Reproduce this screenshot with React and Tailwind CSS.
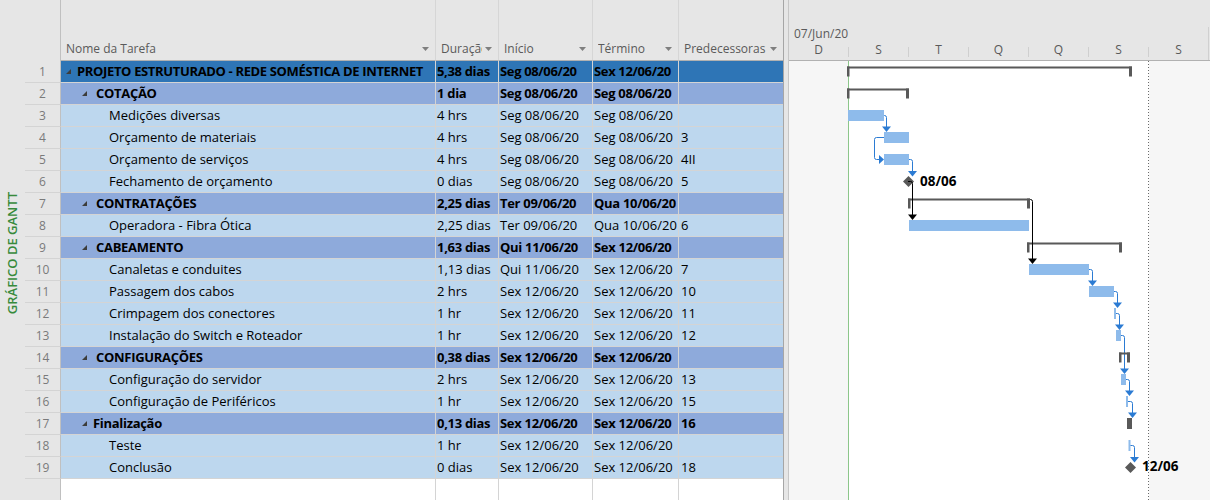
import React from 'react'

const rows = [
  { n: 1, name: 'PROJETO ESTRUTURADO - REDE SOMÉSTICA DE INTERNET', dur: '5,38 dias', ini: 'Seg 08/06/20', fim: 'Sex 12/06/20', pred: '', kind: 'root' },
  { n: 2, name: 'COTAÇÃO', dur: '1 dia', ini: 'Seg 08/06/20', fim: 'Seg 08/06/20', pred: '', kind: 'sum' },
  { n: 3, name: 'Medições diversas', dur: '4 hrs', ini: 'Seg 08/06/20', fim: 'Seg 08/06/20', pred: '', kind: 'task' },
  { n: 4, name: 'Orçamento de materiais', dur: '4 hrs', ini: 'Seg 08/06/20', fim: 'Seg 08/06/20', pred: '3', kind: 'task' },
  { n: 5, name: 'Orçamento de serviços', dur: '4 hrs', ini: 'Seg 08/06/20', fim: 'Seg 08/06/20', pred: '4II', kind: 'task' },
  { n: 6, name: 'Fechamento de orçamento', dur: '0 dias', ini: 'Seg 08/06/20', fim: 'Seg 08/06/20', pred: '5', kind: 'task' },
  { n: 7, name: 'CONTRATAÇÕES', dur: '2,25 dias', ini: 'Ter 09/06/20', fim: 'Qua 10/06/20', pred: '', kind: 'sum' },
  { n: 8, name: 'Operadora - Fibra Ótica', dur: '2,25 dias', ini: 'Ter 09/06/20', fim: 'Qua 10/06/20', pred: '6', kind: 'task' },
  { n: 9, name: 'CABEAMENTO', dur: '1,63 dias', ini: 'Qui 11/06/20', fim: 'Sex 12/06/20', pred: '', kind: 'sum' },
  { n: 10, name: 'Canaletas e conduites', dur: '1,13 dias', ini: 'Qui 11/06/20', fim: 'Sex 12/06/20', pred: '7', kind: 'task' },
  { n: 11, name: 'Passagem dos cabos', dur: '2 hrs', ini: 'Sex 12/06/20', fim: 'Sex 12/06/20', pred: '10', kind: 'task' },
  { n: 12, name: 'Crimpagem dos conectores', dur: '1 hr', ini: 'Sex 12/06/20', fim: 'Sex 12/06/20', pred: '11', kind: 'task' },
  { n: 13, name: 'Instalação do Switch e Roteador', dur: '1 hr', ini: 'Sex 12/06/20', fim: 'Sex 12/06/20', pred: '12', kind: 'task' },
  { n: 14, name: 'CONFIGURAÇÕES', dur: '0,38 dias', ini: 'Sex 12/06/20', fim: 'Sex 12/06/20', pred: '', kind: 'sum' },
  { n: 15, name: 'Configuração do servidor', dur: '2 hrs', ini: 'Sex 12/06/20', fim: 'Sex 12/06/20', pred: '13', kind: 'task' },
  { n: 16, name: 'Configuração de Periféricos', dur: '1 hr', ini: 'Sex 12/06/20', fim: 'Sex 12/06/20', pred: '15', kind: 'task' },
  { n: 17, name: 'Finalização', dur: '0,13 dias', ini: 'Sex 12/06/20', fim: 'Sex 12/06/20', pred: '16', kind: 'sum', tight: true },
  { n: 18, name: 'Teste', dur: '1 hr', ini: 'Sex 12/06/20', fim: 'Sex 12/06/20', pred: '', kind: 'task' },
  { n: 19, name: 'Conclusão', dur: '0 dias', ini: 'Sex 12/06/20', fim: 'Sex 12/06/20', pred: '18', kind: 'task' },
]

const rowBg = {
  root: 'bg-[#2e75b6] font-bold tracking-[-0.35px]',
  sum: 'bg-[#8eaadb] font-bold tracking-[-0.3px]',
  task: 'bg-[#bdd7ee]',
}

const days = ['D', 'S', 'T', 'Q', 'Q', 'S', 'S']

const BAR = '#8ebbeb'
const DARK = '#595959'
const LINK = '#2b7bd3'

function Caret() {
  return (
    <svg width="7" height="4" viewBox="0 0 7 4" className="shrink-0">
      <path d="M0 0H7L3.5 4Z" fill="#7f7f7f" />
    </svg>
  )
}

function Twisty() {
  return (
    <svg width="5" height="5" viewBox="0 0 5 5" className="shrink-0">
      <path d="M5 0V5H0Z" fill="#3c3c3c" />
    </svg>
  )
}

function HeadCell({ w, label, last }) {
  return (
    <div className={`${w} flex items-end border-b border-b-[#b1b1b1] ${last ? '' : 'border-r border-r-[#d6d6d6]'}`}>
      <div className="flex h-[22px] w-full items-center pl-[5px] pr-[6px] text-[12px] text-[#5a5a5a]">
        <span className="mr-[3px] min-w-0 flex-1 overflow-hidden whitespace-nowrap">{label}</span>
        <Caret />
      </div>
    </div>
  )
}

function NameCell({ r }) {
  if (r.kind === 'root') {
    return (
      <div className="flex w-[375px] items-center gap-[6px] overflow-hidden border-r border-[#d4d4d4] pl-[5px] whitespace-nowrap">
        <Twisty />
        <span>{r.name}</span>
      </div>
    )
  }
  if (r.kind === 'sum') {
    return (
      <div className="flex w-[375px] items-center border-r border-[#d4d4d4] pl-[21px] whitespace-nowrap">
        <Twisty />
        <span className={r.tight ? 'ml-[6px]' : 'ml-[9px]'}>{r.name}</span>
      </div>
    )
  }
  return (
    <div className="flex w-[375px] items-center border-r border-[#d4d4d4] pl-[48px] whitespace-nowrap">
      {r.name}
    </div>
  )
}

function Row({ r }) {
  return (
    <div className="flex h-[22px] shrink-0">
      <div className="w-[36px] border-r border-b border-r-[#c0c0c0] border-b-[#d4d4d4] text-center text-[12px] leading-[21px] text-[#7a7a7a]">
        {r.n}
      </div>
      <div className={`flex flex-1 border-b border-[#d4d4d4] text-[13px] text-black ${rowBg[r.kind]}`}>
        <NameCell r={r} />
        <div className="flex w-[63px] items-center overflow-hidden border-r border-[#d4d4d4] pl-[1px] whitespace-nowrap">{r.dur}</div>
        <div className="flex w-[94px] items-center overflow-hidden border-r border-[#d4d4d4] pl-[1px] whitespace-nowrap">{r.ini}</div>
        <div className="flex w-[86px] items-center overflow-hidden border-r border-[#d4d4d4] pl-[1px] whitespace-nowrap">{r.fim}</div>
        <div className="flex w-[104px] items-center pl-[2px] whitespace-nowrap">{r.pred}</div>
      </div>
    </div>
  )
}

function Bracket({ x1, x2, y }) {
  return (
    <g fill={DARK}>
      <rect x={x1} y={y} width={x2 - x1} height="2" />
      <rect x={x1} y={y} width="2.5" height="10" />
      <rect x={x2 - 3} y={y} width="3" height="10" />
    </g>
  )
}

function Bar({ x1, x2, n }) {
  const top = 61 + (n - 1) * 22
  return <rect x={x1} y={top + 5} width={x2 - x1} height="11" fill={BAR} />
}

function Diamond({ x, n }) {
  const cy = 61 + (n - 1) * 22 + 10.5
  return <polygon points={`${x},${cy - 5.5} ${x + 5.5},${cy} ${x},${cy + 5.5} ${x - 5.5},${cy}`} fill={DARK} />
}

function Link({ x0, y0, x, tip, color = LINK }) {
  return (
    <g>
      <path d={`M${x0} ${y0}H${x - 2}Q${x} ${y0} ${x} ${y0 + 2}V${tip - 5}`} stroke={color} strokeWidth="1" fill="none" />
      <polygon points={`${x - 4.5},${tip - 5.5} ${x + 4.5},${tip - 5.5} ${x},${tip}`} fill={color} />
    </g>
  )
}

function Chart() {
  return (
    <svg width="421" height="439" className="block">
      <g transform="translate(-789 -61)">
        <rect x="789" y="61" width="421" height="439" fill="#ffffff" />
        <rect x="789" y="61" width="59" height="439" fill="#f6f6f6" />
        <rect x="1149" y="61" width="61" height="439" fill="#f6f6f6" />
        <line x1="848.5" y1="61" x2="848.5" y2="500" stroke="#8cc68a" />
        <line x1="1148.5" y1="61" x2="1148.5" y2="500" stroke="#6a6a6a" strokeDasharray="1 2" />

        <Bracket x1={847} x2={1132} y={66.5} />
        <Bracket x1={847} x2={909} y={88.5} />
        <Bar x1={848} x2={884} n={3} />
        <Bar x1={884} x2={909} n={4} />
        <Bar x1={884} x2={909} n={5} />
        <Diamond x={908.5} n={6} />
        <text x="920" y="185.5" fontSize="13.5" fontWeight="700" fill="#000">08/06</text>
        <Bracket x1={908} x2={1030} y={198.5} />
        <Bar x1={909} x2={1029} n={8} />
        <Bracket x1={1027} x2={1122} y={242.5} />
        <Bar x1={1029} x2={1089} n={10} />
        <Bar x1={1089} x2={1114} n={11} />
        <Bar x1={1114} x2={1116} n={12} />
        <Bar x1={1116} x2={1121} n={13} />

        <Link x0={884} y0={115.5} x={886.5} tip={132} />
        <path d="M884 137.5H876.5Q874.5 137.5 874.5 139.5V157.5Q874.5 159.5 876.5 159.5H879" stroke={LINK} fill="none" />
        <polygon points="879,155 879,164 884,159.5" fill={LINK} />
        <Link x0={909} y0={159.5} x={912.5} tip={176.5} />
        <Link x0={908} y0={181.5} x={912.5} tip={220} color="#000" />
        <Link x0={1030} y0={199.5} x={1032.5} tip={264} color="#000" />
        <Link x0={1089} y0={269.5} x={1092.5} tip={286} />
        <Link x0={1114} y0={291.5} x={1117.5} tip={308} />
        <Link x0={1116} y0={313.5} x={1119.5} tip={330} />
        <Link x0={1121} y0={335.5} x={1124.5} tip={374} />

        <Bracket x1={1119} x2={1130} y={352.5} />
        <Bar x1={1121} x2={1126} n={15} />
        <Bar x1={1126} x2={1128} n={16} />
        <rect x="1127" y="418" width="5" height="11" fill={DARK} />
        <Bar x1={1128.5} x2={1130.5} n={18} />

        <Link x0={1126} y0={379.5} x={1129.5} tip={396} />
        <Link x0={1128} y0={401.5} x={1132.5} tip={418} />
        <Link x0={1130.5} y0={445.5} x={1134.5} tip={462.5} />

        <Diamond x={1130.5} n={19} />
        <text x="1142" y="471" fontSize="13.5" fontWeight="700" fill="#000">12/06</text>
      </g>
    </svg>
  )
}

export default function App() {
  return (
    <div className="flex h-[500px] w-[1210px] overflow-hidden bg-[#e6e6e6] font-['Open_Sans','Noto_Sans',sans-serif]">
      <div className="flex w-[25px] shrink-0 items-center justify-center pt-[6px]">
        <span className="rotate-180 whitespace-nowrap text-[13px] font-semibold text-[#378a3b] [writing-mode:vertical-rl]">
          GRÁFICO DE GANTT
        </span>
      </div>

      <div className="flex w-[758px] shrink-0 flex-col">
        <div className="flex h-[61px] shrink-0">
          <div className="w-[36px] border-r border-[#c0c0c0]" />
          <HeadCell w="w-[375px]" label="Nome da Tarefa" />
          <HeadCell w="w-[63px]" label="Duração" />
          <HeadCell w="w-[94px]" label="Início" />
          <HeadCell w="w-[86px]" label="Término" />
          <HeadCell w="w-[104px]" label="Predecessoras" last />
        </div>
        {rows.map(r => (
          <Row key={r.n} r={r} />
        ))}
        <div className="flex flex-1">
          <div className="w-[36px] border-r border-[#c0c0c0]" />
          <div className="flex flex-1 bg-white">
            <div className="w-[375px] border-r border-[#d4d4d4]" />
            <div className="w-[63px] border-r border-[#d4d4d4]" />
            <div className="w-[94px] border-r border-[#d4d4d4]" />
            <div className="w-[86px] border-r border-[#d4d4d4]" />
            <div className="w-[104px]" />
          </div>
        </div>
      </div>

      <div className="w-[6px] shrink-0 border-l border-r border-l-[#a6a6a6] border-r-[#c6c6c6]" />

      <div className="flex w-[421px] shrink-0 flex-col">
        <div className="flex h-[61px] shrink-0 items-end border-b border-[#b1b1b1]">
          <div className="flex h-[33px] w-[420px] flex-col border-r border-[#d0d0d0]">
            <div className="h-[13px] pl-[5px] text-[12px] leading-[13px] text-[#5a5a5a]">07/Jun/20</div>
            <div className="flex flex-1">
              {days.map((d, i) => (
                <div key={i} className={`flex ${i === 0 ? 'w-[59px]' : 'w-[60px]'}`}>
                  {i > 0 && <div className="mt-[7px] h-[10px] w-px bg-[#cfcfcf]" />}
                  <div className="flex flex-1 items-center justify-center text-[12px] text-[#5a5a5a]">{d}</div>
                </div>
              ))}
            </div>
          </div>
        </div>
        <Chart />
      </div>
    </div>
  )
}
